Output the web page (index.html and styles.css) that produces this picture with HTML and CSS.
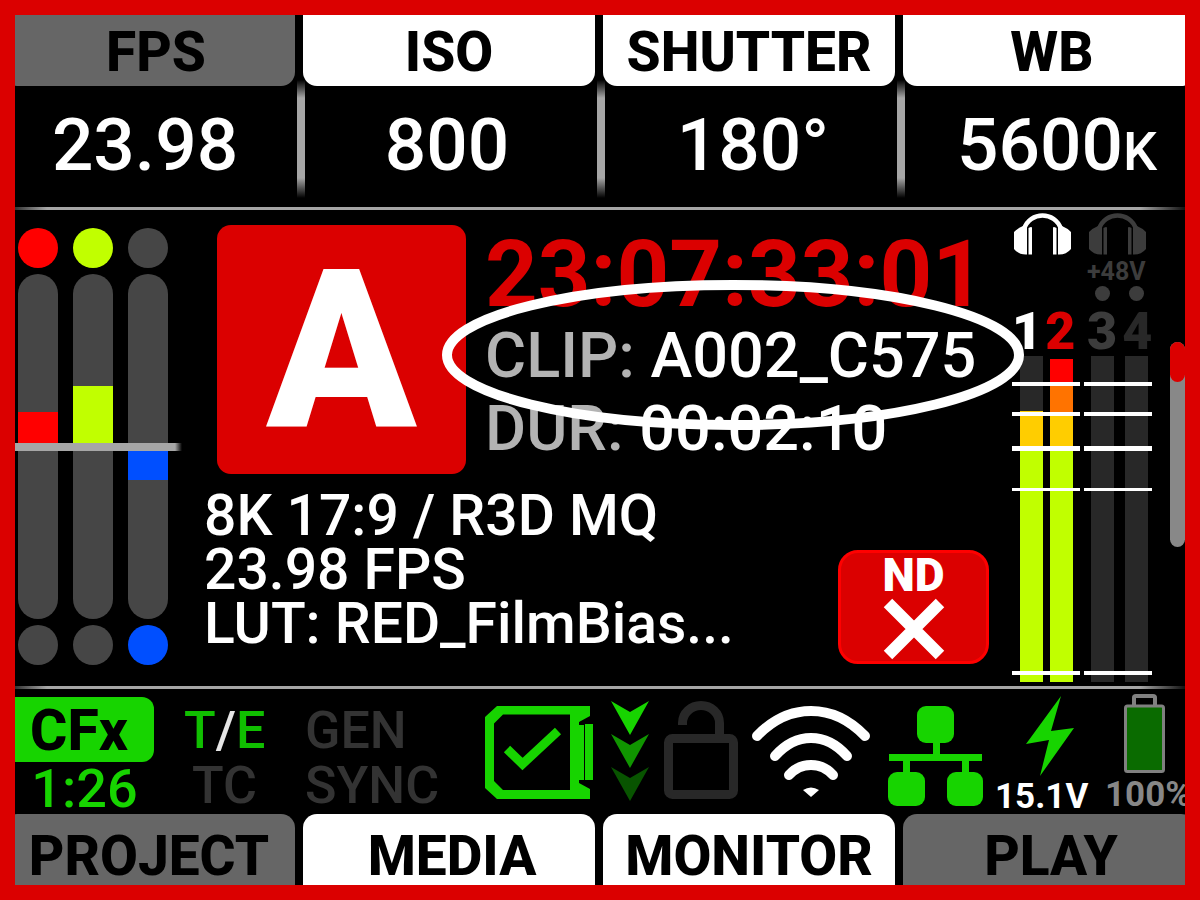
FILE: index.html
```html
<!DOCTYPE html>
<html lang="en">
<head>
<meta charset="utf-8">
<title>Camera LCD</title>
<link rel="stylesheet" href="styles.css">
</head>
<body>
<div class="screen">
  <nav class="tabs tabs-top">
    <button class="tab tab-dim tab-fps">FPS</button>
    <button class="tab">ISO</button>
    <button class="tab">SHUTTER</button>
    <button class="tab tab-wb">WB</button>
  </nav>
  <section class="values">
    <div class="value">23.98</div>
    <div class="value">800</div>
    <div class="value value-shutter">180°</div>
    <div class="value value-wb"><span>5600<span class="unit">K</span></span></div>
  </section>
  <div class="rule"></div>
  <main class="main">
    <section class="rgb">
      <div class="channel">
        <i class="dot red"></i>
        <div class="track"><div class="half up"><i class="red" style="height:35px"></i></div><div class="half"></div></div>
        <i class="dot"></i>
      </div>
      <div class="channel">
        <i class="dot lime"></i>
        <div class="track"><div class="half up"><i class="lime" style="height:61px"></i></div><div class="half"></div></div>
        <i class="dot"></i>
      </div>
      <div class="channel">
        <i class="dot"></i>
        <div class="track"><div class="half up"></div><div class="half"><i class="blue" style="height:33px"></i></div></div>
        <i class="dot blue"></i>
      </div>
    </section>

    <section class="info">
      <div class="clip-row">
        <div class="cam">A</div>
        <div class="meta">
          <div class="timecode">23:07:33:01</div>
          <div class="meta-line"><span class="label">CLIP:</span> A002_C575</div>
          <div class="meta-line"><span class="label">DUR:</span> 00:02:10</div>
          <svg class="ring" viewBox="0 0 582 150"><ellipse cx="291" cy="75" rx="286" ry="70" fill="none" stroke="#fff" stroke-width="10"/></svg>
        </div>
      </div>
      <div class="format-row">
        <div class="format">
          <div>8K 17:9 / R3D MQ</div>
          <div>23.98 FPS</div>
          <div>LUT: RED_FilmBias...</div>
        </div>
        <div class="nd">
          <span>ND</span>
          <svg width="62" height="62" viewBox="0 0 62 62"><path d="M5 5L57 57M57 5L5 57" stroke="#fff" stroke-width="12"/></svg>
        </div>
      </div>
    </section>

    <section class="audio">
      <div class="pair">
        <svg class="phones" viewBox="0 0 57 42"><path d="M10 16C16-2 41-2 47 16" fill="none" stroke="currentColor" stroke-width="4.500"/><path d="M13 13V41.500Q5 42 0 36V19Q4 15 9 13ZM14.500 15Q18 13 18 15V41.500H14.500ZM44 13V41.500Q52 42 57 36V19Q53 15 48 13ZM42.500 15Q39 13 39 15V41.500H42.500Z" fill="currentColor"/></svg>
        <div class="phantom"></div>
        <div class="nums"><span>1</span><span class="hot">2</span></div>
        <div class="meters">
          <i class="meter meter-one"></i><i class="meter meter-two"></i>
          <b class="tick t1"></b><b class="tick t2"></b><b class="tick t3"></b><b class="tick t4"></b><b class="tick t5"></b>
        </div>
      </div>
      <div class="pair pair-off">
        <svg class="phones" viewBox="0 0 57 42"><path d="M10 16C16-2 41-2 47 16" fill="none" stroke="currentColor" stroke-width="4.500"/><path d="M13 13V41.500Q5 42 0 36V19Q4 15 9 13ZM14.500 15Q18 13 18 15V41.500H14.500ZM44 13V41.500Q52 42 57 36V19Q53 15 48 13ZM42.500 15Q39 13 39 15V41.500H42.500Z" fill="currentColor"/></svg>
        <div class="phantom">+48V<div class="leds"><i></i><i></i></div></div>
        <div class="nums"><span>3</span><span class="dark">4</span></div>
        <div class="meters">
          <i class="meter"></i><i class="meter"></i>
          <b class="tick t1"></b><b class="tick t2"></b><b class="tick t3"></b><b class="tick t4"></b><b class="tick t5"></b>
        </div>
      </div>
    </section>

    <div class="scroll"><i></i></div>
  </main>
  <div class="rule"></div>
  <section class="status">
    <div class="card"><div class="card-name">CFx</div><div class="card-time">1:26</div></div>
    <div class="sync tc"><div class="on">T<span class="slash">/</span>E</div><div>TC</div></div>
    <div class="sync gen"><div>GEN</div><div>SYNC</div></div>
    <svg class="media" width="108" height="93" viewBox="0 0 108 93"><path fill="#17d400" fill-rule="evenodd" d="M12 0H105V10L94 16V19H99V74H94V77L105 83V93H12L0 82V11ZM18 8.500L9 17.500V75L18 84H85V8.500Z"/><path fill="#17d400" d="M100 18H108V74H100Z"/><path d="M22 43L37.500 58L73 25" fill="none" stroke="#17d400" stroke-width="9"/></svg>
    <svg class="arrows" width="38" height="100" viewBox="0 0 38 100"><path fill="#17d400" d="M0 0L19 11L38 0L19 34Z"/><path fill="#109500" d="M0 33L19 44L38 33L19 67Z"/><path fill="#085400" d="M0 66L19 77L38 66L19 100Z"/></svg>
    <svg class="lock" width="74" height="98" viewBox="0 0 74 98"><rect x="4.500" y="37.500" width="65" height="56" rx="4" fill="none" stroke="#282828" stroke-width="9"/><path d="M18.500 24V22A18.500 17.500 0 0 1 55.500 22V36" fill="none" stroke="#282828" stroke-width="9"/></svg>
    <svg class="wifi" width="118" height="92" viewBox="0 0 118 92"><g fill="none" stroke="#fff" stroke-width="10" stroke-linecap="round"><path d="M5 30Q29 5 59 5T113 30"/><path d="M23 50Q39 32 59 32T95 50"/><path d="M37 69Q46 59 59 59T81 69"/></g><path d="M51 84Q59 79 67 84L59 91Z" fill="#fff"/></svg>
    <svg class="net" width="96" height="100" viewBox="0 0 96 100" fill="#17d400"><rect x="29" y="0" width="37" height="37" rx="9"/><rect x="0" y="66" width="37" height="34" rx="9"/><rect x="59" y="66" width="36" height="34" rx="9"/><path d="M45 36H52V48H94V55H81V67H74V55H22V67H15V55H1V48H45Z"/></svg>
    <div class="power volts"><svg width="48" height="80" viewBox="0 0 48 80"><path d="M35 0L25 35L48 32L14 80L23 44L0 48Z" fill="#17d400"/></svg><div>15.1V</div></div>
    <div class="power batt"><svg width="41" height="80" viewBox="0 0 41 80"><path d="M10 12V3.500Q10 2 12 2H29Q31 2 31 3.500V12" fill="none" stroke="#808080" stroke-width="4"/><rect x="1.500" y="12" width="38" height="65.500" rx="2" fill="#0a6b00" stroke="#808080" stroke-width="3"/></svg><div>100%</div></div>
  </section>
  <nav class="tabs tabs-bottom">
    <button class="tab tab-dim">PROJECT</button>
    <button class="tab tab-media">MEDIA</button>
    <button class="tab">MONITOR</button>
    <button class="tab tab-dim tab-play">PLAY</button>
  </nav>
</div>
</body>
</html>
```

FILE: styles.css
```css
* { box-sizing: border-box; }
body { margin: 0; background: #000; color: #fff; font-family: Roboto, sans-serif; font-weight: 500; }
svg { display: block; flex: none; }
i, b { display: block; }

.screen { display: flex; flex-direction: column; min-height: 100vh; border: 15px solid #db0000; overflow: hidden; }

.tabs, .values { display: grid; grid-template-columns: repeat(4, 1fr); column-gap: 8px; margin: 0 -10px 0 -12px; }
.tab { height: 71px; padding: 4px 0 0; border: 0; background: #fff; color: #000; font: 800 55px/67px Roboto, sans-serif; }
.tabs-top { position: relative; z-index: 1; }
.tabs-top .tab { border-radius: 0 0 14px 14px; }
.tabs-bottom .tab { border-radius: 14px 14px 0 0; padding-top: 14px; line-height: 57px; }
.tab-dim { background: #666; }
.tabs-top .tab-fps { padding-left: 14px; }
.tabs-top .tab-wb { padding-left: 6px; }
.tabs-bottom .tab-media { padding-left: 6px; }
.tabs-bottom .tab-play { padding-left: 4px; }

.values { height: 121px; }
.value { position: relative; padding: 15px 8px 0 0; text-align: center; font-size: 73px; line-height: 88px; }
.value + .value { padding-right: 4px; }
.value + .value::before { content: ""; position: absolute; left: -6px; top: -6px; width: 8px; height: 118px; background: linear-gradient(transparent, #a6a6a6 18px, #a6a6a6 98px, transparent); }
.value-shutter { padding-left: 12px; }
.value-wb { padding-left: 20px; }
.unit { font-size: 54px; }

.rule { height: 3px; flex: none; background: linear-gradient(90deg, #333, #a6a6a6 32px, #a6a6a6 calc(100% - 45px), #111); }

.main { flex: 1; display: flex; }
.rgb { position: relative; width: 167px; flex: none; display: flex; gap: 15px; padding: 18px 0 21px 3px; }
.rgb::after { content: ""; position: absolute; left: 0; right: 0; top: 233px; height: 8px; background: linear-gradient(90deg, #a6a6a6 160px, transparent); }
.channel { width: 40px; display: flex; flex-direction: column; gap: 6px; }
.dot { height: 40px; border-radius: 50%; background: #464646; }
.track { flex: 1; display: flex; flex-direction: column; border-radius: 20px; background: #464646; }
.half { flex: 1; display: flex; flex-direction: column; }
.up { justify-content: flex-end; }
.red { background: #f00; }
.lime { background: #c1ff00; }
.blue { background: #004fff; }

.info { flex: 1; padding: 16px 23px 22px 22px; display: flex; flex-direction: column; gap: 14px; }
.clip-row { display: flex; gap: 19px; padding-left: 13px; height: 249px; margin-top: -1px; }
.cam { width: 249px; height: 249px; flex: none; border-radius: 14px; background: #db0000; text-align: center; font-size: 220px; line-height: 252px; font-weight: 900; }
.meta { position: relative; padding-top: 6px; white-space: nowrap; }
.timecode { color: #db0000; font-size: 92px; line-height: 88px; font-weight: 700; }
.meta-line { font-size: 63px; line-height: 73px; }
.label { color: #b3b3b3; }
.ring { position: absolute; z-index: 2; left: -43px; top: 55px; width: 582px; height: 150px; }
.format-row { flex: 1; display: flex; justify-content: space-between; }
.format { padding-top: 1px; font-size: 57px; line-height: 54px; white-space: nowrap; }
.nd { width: 151px; height: 114px; align-self: flex-end; flex: none; display: flex; flex-direction: column; align-items: center; border: 3px solid #f00; border-radius: 20px; background: #db0000; font-size: 46px; line-height: 45px; font-weight: 900; }

.audio { width: 140px; flex: none; display: flex; gap: 4px; padding: 3px 0 4px; }
.pair { width: 68px; display: flex; flex-direction: column; }
.pair-off { color: #3c3c3c; }
.phones { width: 57px; height: 42px; margin-left: 2px; }
.pair-off .phones { margin-left: 5px; }
.phantom { height: 52px; padding: 3px 3px; font-size: 25px; line-height: 28px; font-weight: 700; white-space: nowrap; }
.leds { display: flex; gap: 19px; padding-left: 8px; }
.leds i { width: 15px; height: 15px; flex: none; border-radius: 50%; background: currentColor; }
.nums { display: flex; gap: 3px; font-size: 52px; line-height: 49px; font-weight: 900; }
.pair-off .nums { gap: 5px; padding-left: 3px; }
.hot { color: #db0000; }
.dark { color: #282828; }
.meters { flex: 1; position: relative; display: flex; gap: 7px; padding-left: 8px; }
.pair-off .meters { gap: 11px; padding-left: 7px; }
.meter { width: 23px; background: #282828; }
.meter-one { background: linear-gradient(#282828 55px, #ffcd00 55px, #ffcd00 92px, #c1ff00 92px); }
.meter-two { background: linear-gradient(#000 3px, #f00 3px, #f00 28px, #ff7300 28px, #ff7300 58px, #ffcd00 58px, #ffcd00 92px, #c1ff00 92px); }
.tick { position: absolute; left: 0; right: 0; height: 4px; background: #fff; }
.t1 { top: 26px; }
.t2 { top: 56px; }
.t3 { top: 90px; height: 5px; }
.t4 { top: 132px; height: 3px; }
.t5 { bottom: 7px; }

.scroll { width: 15px; height: 205px; flex: none; margin: 132px 0 0 18px; border-radius: 8px; background: #888; }
.scroll i { height: 40px; border-radius: 8px; background: #db0000; }

.status { height: 125px; flex: none; display: flex; white-space: nowrap; }
.status > * { flex: none; }
.card { width: 139px; padding-top: 8px; color: #17d400; text-align: center; }
.card-name { height: 65px; padding-right: 11px; border-radius: 0 12px 12px 0; background: #17d400; color: #000; font-size: 57px; line-height: 67px; font-weight: 800; }
.card-time { font-size: 54px; line-height: 54px; }
.sync { padding-top: 14px; color: #333; font-size: 52px; line-height: 55px; }
.tc { width: 81px; margin-left: 30px; text-align: center; }
.gen { width: 136px; margin-left: 40px; }
.on { color: #10bf00; }
.slash { color: #e6e6e6; }
.media { margin: 17px 0 0 44px; }
.arrows { margin: 12px 0 0 18px; }
.lock { margin: 12px 0 0 15px; }
.wifi { margin: 17px 0 0 14px; }
.net { margin: 17px 0 0 18px; }
.power { margin-top: 7px; font-size: 35px; line-height: 42px; font-weight: 700; }
.volts { width: 98px; margin-left: 11px; }
.volts svg { margin-left: 31px; }
.batt { width: 80px; margin-left: 12px; color: #878787; }
.batt svg { margin: -2px 0 0 19px; }
```
